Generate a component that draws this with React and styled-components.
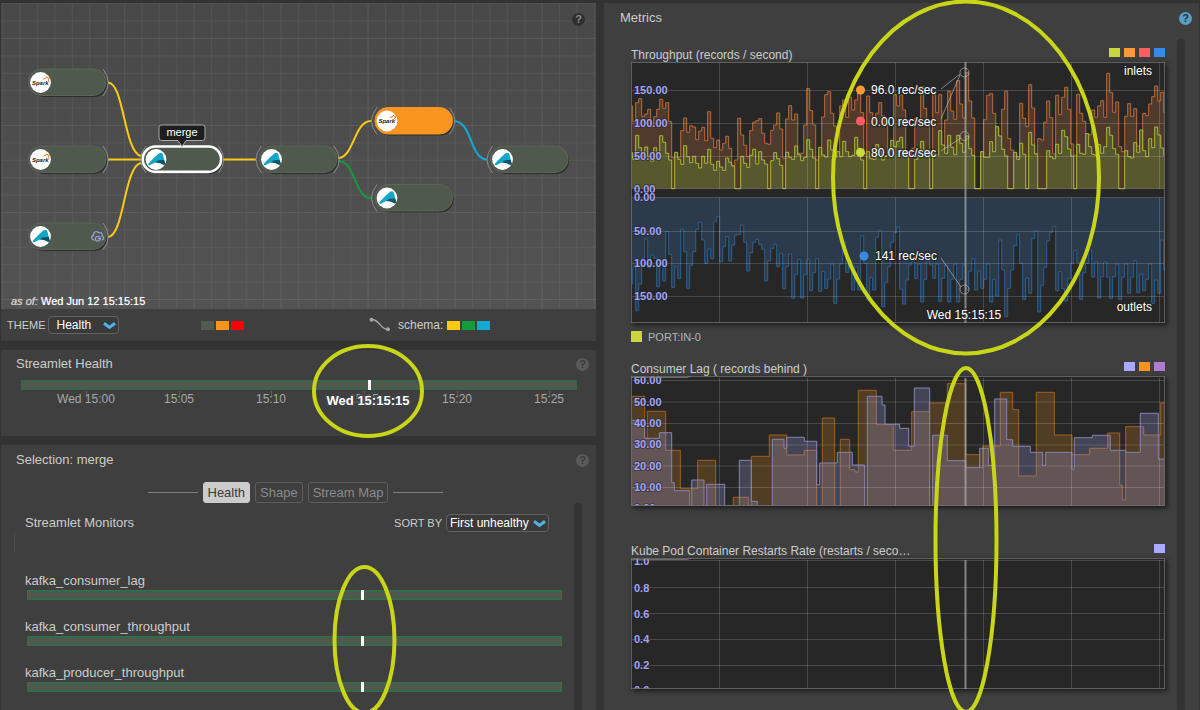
import React from 'react';
import styled, { createGlobalStyle } from 'styled-components';

const Global = createGlobalStyle`
  * { box-sizing: border-box; }
  body {
    margin: 0;
    background: #333333;
    color: #cccccc;
    font-family: "Liberation Sans", Arial, sans-serif;
    font-size: 13px;
    line-height: 16px;
  }
  h2, h3, h4, p { margin: 0; font-size: inherit; font-weight: 400; }
  svg { display: block; }
`;

const Page = styled.main`
  position: relative;
  display: grid;
  grid-template-columns: 1fr 1fr;
  gap: 8px;
  min-height: 100vh;
  padding: 3px 1px 0;
  overflow: hidden;
`;

const Column = styled.div`
  display: flex;
  flex-direction: column;
  gap: 9px;
  min-width: 0;
`;

const Panel = styled.section`
  display: flex;
  flex-direction: column;
  background: #3f3f3f;
  flex: ${(p) => (p.$grow ? 1 : 'none')};
  padding: ${(p) => p.$pad || '0'};
  min-width: 0;
`;

const PanelHeader = styled.header`
  display: flex;
  align-items: center;
  justify-content: space-between;
  height: 30px;
  padding: ${(p) => p.$pad || '0 5px 0 15px'};
`;

const HelpButton = styled.button`
  width: 13px;
  height: 13px;
  padding: 0;
  border: 0;
  border-radius: 50%;
  background: ${(p) => p.$bg || '#5a5a5a'};
  color: ${(p) => p.$fg || '#3a3a3a'};
  font: bold 11px/13px "Liberation Sans", Arial, sans-serif;
  text-align: center;
`;

/* ---------- topology ---------- */

const Canvas = styled.div`
  display: grid;
  background: linear-gradient(#484848, #535353);
  > * { grid-area: 1 / 1; }
`;

const CanvasDrawing = styled.svg`
  width: 100%;
  height: auto;
`;

const CanvasHelp = styled.div`
  justify-self: end;
  padding: 8px 11px;
`;

const AsOf = styled.p`
  align-self: end;
  padding: 0 10px;
  font-size: 11px;
  color: #ffffff;
  text-shadow: 0 0 1px #ffffff99;
  em { color: #d0d0d0; }
`;

const LegendBar = styled.div`
  display: grid;
  grid-template-columns: 200fr 168fr 227fr;
  align-items: center;
  height: 32px;
`;

const Inline = styled.div`
  display: flex;
  align-items: center;
  gap: ${(p) => p.$gap || 2}px;
  padding-left: ${(p) => p.$left || 0}px;
`;

const Caption = styled.label`
  font-size: ${(p) => p.$size || 11}px;
`;

const SelectBox = styled.div`
  position: relative;
  display: flex;
  select {
    appearance: none;
    width: ${(p) => p.$width}px;
    height: 18px;
    padding: 0 16px 0 ${(p) => p.$inset}px;
    border: 1px solid #626262;
    border-radius: 4px;
    background: #3a3a3a;
    color: #ffffff;
    font: 12px/16px "Liberation Sans", Arial, sans-serif;
  }
  svg {
    position: absolute;
    right: 3px;
    top: 6px;
    pointer-events: none;
  }
`;

const Swatch = styled.span`
  width: ${(p) => p.$w || 13}px;
  height: ${(p) => p.$h || 9}px;
  background: ${(p) => p.$color};
`;

/* ---------- timelines ---------- */

const TimelineBox = styled.div`
  padding: 0 19px 0 20px;
`;

const TimelineDrawing = styled.svg`
  width: 100%;
  height: auto;
  overflow: visible;
`;

const Tabs = styled.div`
  display: flex;
  align-items: center;
  justify-content: center;
  gap: 5px;
  padding: 7px 6px 0 0;
`;

const Rule = styled.span`
  width: 50px;
  height: 1px;
  background: #808080;
`;

const Tab = styled.button`
  height: 21px;
  padding: 0 4px;
  border: 1px solid ${(p) => (p.$active ? '#cccccc' : '#5c5c5c')};
  border-radius: 3px;
  background: ${(p) => (p.$active ? '#cccccc' : 'transparent')};
  color: ${(p) => (p.$active ? '#3a3a3a' : '#8a8a8a')};
  font: 13px/16px "Liberation Sans", Arial, sans-serif;
`;

const ScrollArea = styled.div`
  display: flex;
  flex: 1;
  padding-right: ${(p) => p.$right}px;
`;

const Track = styled.div`
  width: 8px;
  margin: ${(p) => p.$margin || '0'};
  border-radius: 4px;
  background: #333333;
`;

const MonitorList = styled.div`
  flex: 1;
  min-width: 0;
  padding: 10px 12px 14px 24px;
`;

const MonitorHead = styled.div`
  display: flex;
  align-items: center;
  justify-content: space-between;
  height: 20px;
  padding-right: 13px;
`;

const Divider = styled.div`
  width: 1px;
  height: 18px;
  margin: 0 0 22px -11px;
  background: #4d4d4d;
`;

const Monitor = styled.div`
  padding-bottom: 19px;
`;

const MonitorBar = styled.div`
  position: relative;
  height: 10px;
  margin: 1px 0 0 2px;
  border: 1px solid #217a46;
  background: #50594d;
  &::after {
    content: "";
    position: absolute;
    left: 62.5%;
    top: -1px;
    width: 3px;
    height: 10px;
    background: #ffffff;
  }
`;

/* ---------- metric charts ---------- */

const Charts = styled.div`
  flex: 1;
  min-width: 0;
  padding: 13px 12px 19px 27px;
`;

const ChartHead = styled.div`
  display: flex;
  align-items: center;
  justify-content: space-between;
  height: 16px;
  margin-top: ${(p) => p.$top || 0}px;
  h3 {
    width: 282px;
    padding-top: 2px;
    overflow: hidden;
    white-space: nowrap;
    text-overflow: ellipsis;
    font-size: 12px;
  }
`;

const Legend = styled.div`
  display: flex;
  gap: 4px;
  padding-bottom: 3px;
`;

const ChartDrawing = styled.svg`
  width: 100%;
  height: auto;
  background: #272727;
  box-shadow: 2px 2px 5px #00000099;
`;

const PortRow = styled.div`
  display: flex;
  align-items: center;
  gap: 6px;
  height: 11px;
  margin-top: 8px;
  font-size: 11px;
  color: #b4b4b4;
`;

const Annotations = styled.svg`
  position: absolute;
  inset: 0;
  width: 100%;
  height: auto;
  pointer-events: none;
`;

const Chevron = () => (
  <svg width="13" height="8" viewBox="0 0 13 8" fill="none" stroke="#4fb3e8" strokeWidth="3">
    <path d="M1 1.2 L6.5 5.4 L12 1.2" />
  </svg>
);

/* ---------- topology drawing ---------- */

const NODES = [
  { x: 40.5, y: 82.5, logo: 'spark', out: true },
  { x: 40.5, y: 159.5, logo: 'spark', out: true },
  { x: 40.5, y: 236.5, logo: 'akka', out: true, cloud: true },
  { x: 156, y: 159.5, logo: 'akka', in: true, out: true, selected: true },
  { x: 271.5, y: 159.5, logo: 'akka', in: true, out: true },
  { x: 387, y: 121, logo: 'spark', in: true, out: true, fill: '#f9941f' },
  { x: 387, y: 198, logo: 'akka', in: true },
  { x: 502.5, y: 159.5, logo: 'akka', in: true },
];

const EDGES = [
  ['M108 82.5 C124 82.5 124 152 141 156', '#fdca13'],
  ['M108 159.5 H141', '#fdca13'],
  ['M108 237 C124 237 124 166 141 163', '#fdca13'],
  ['M223 159.5 H256', '#fdca13'],
  ['M338 158 C354 158 354 121 371 121', '#fdca13'],
  ['M338 161 C356 161 354 198 371 198', '#159a3c'],
  ['M454 121 C472 121 470 159.5 487 159.5', '#12aad4'],
];

const Logo = ({ kind }) =>
  kind === 'spark' ? (
    <g>
      <text x="-8.6" y="2.4" fontSize="6" fontWeight="700" fontStyle="italic" fill="#222222">Spark</text>
      <path d="M3.4 -2.8 L3.6 -4 L5.4 -4.2 L6.3 -5.9 L7.2 -4.4 L9 -4.2 L7.8 -2.6 L8.4 -0.8" fill="none" stroke="#ee7d22" strokeWidth="1" />
    </g>
  ) : (
    <g>
      <path d="M-7.4 4 C-3.8 0.2 0.6 -4.6 3.6 -6.5 Q6 -7.6 6.8 -5.2 L8.6 1.6 C3 0.8 -1.8 3 -5.2 5.2 C-7 6.4 -8.6 5.4 -7.4 4Z" fill="#14a6c9" />
      <path d="M-1 3 C1.6 0.6 4.6 0 8.2 0.8 L9.4 3.8 C9.6 5.4 8.2 5.8 6.6 5 C4 3.6 2 3.2 -1 3Z" fill="#0b5568" />
    </g>
  );

const Node = ({ node }) => (
  <g transform={`translate(${node.x} ${node.y})`}>
    <g fill="none" stroke="#8c8c8c" strokeWidth="1">
      {node.in && <path d="M-10 -13.5 Q-21 0 -10 13.5" />}
      {node.out && <path d="M62.5 -13.5 Q73 0 62.5 13.5" />}
    </g>
    <rect x="-9.5" y="-11.5" width="76" height="26" rx="13" fill="#2d2d2d" />
    <rect
      x="-12" y="-13.5" width="77.5" height="26.5" rx="13"
      fill={node.fill || '#4f5a4d'} stroke={node.fill || '#5c655b'} strokeWidth="1"
    />
    {node.selected && <rect x="-13.3" y="-13" width="78.4" height="25.4" rx="12.7" fill="none" stroke="#ffffff" strokeWidth="2.6" />}
    <circle r="10.4" fill="#ffffff" />
    <Logo kind={node.logo} />
    {node.cloud && (
      <g fill="none" stroke="#9898d8" strokeWidth="1.3">
        <path d="M54 3.6 C50.6 3.6 50.4 -0.6 53 -1 C52.6 -4.6 56.4 -6 58.4 -3.6 C61 -4.8 62.6 -1.8 61.6 -0.2 C64 0.6 63.4 3.4 61 3.6" />
        <circle cx="57.3" cy="2.2" r="2.4" />
        <path d="M57.3 2.2 H60.5" />
      </g>
    )}
  </g>
);

const Topology = () => (
  <CanvasDrawing viewBox="1 3 595 306" role="img" aria-label="Pipeline graph">
    <defs>
      <pattern id="minor" x="19.6" y="38" width="17.4" height="17.4" patternUnits="userSpaceOnUse">
        <path d="M0 0 H17.4 M0 0 V17.4" stroke="#ffffff" strokeOpacity="0.055" strokeWidth="2" />
      </pattern>
      <pattern id="major" x="19.6" y="38" width="87" height="87" patternUnits="userSpaceOnUse">
        <path d="M0 0 H87 M0 0 V87" stroke="#ffffff" strokeOpacity="0.03" strokeWidth="2" />
      </pattern>
    </defs>
    <rect x="1" y="3" width="595" height="306" fill="url(#minor)" />
    <rect x="1" y="3" width="595" height="306" fill="url(#major)" />
    {EDGES.map(([d, color]) => (
      <path key={d} d={d} fill="none" stroke={color} strokeWidth="2" />
    ))}
    {NODES.map((n) => (
      <Node key={`${n.x}-${n.y}`} node={n} />
    ))}
    <path
      d="M161.5 125 H202.5 Q205 125 205 127.5 V138 Q205 140.5 202.5 140.5 H186 L182 146.5 L178 140.5 H161.5 Q159 140.5 159 138 V127.5 Q159 125 161.5 125Z"
      fill="#1e1e1e" stroke="#aaaaaa"
    />
    <text x="182" y="136" fontSize="11" fill="#ffffff" textAnchor="middle">merge</text>
  </CanvasDrawing>
);

/* ---------- chart data: heights in thirds of a pixel, one sample per 3px ---------- */

const INLET_ORANGE = [
  318, 365, 308, 296, 349, 342, 328, 380, 350, 328, 298, 325, 308, 365, 473, 473, 472, 392, 354, 397,
  377, 381, 419, 393, 382, 422, 335, 415, 443, 420, 450, 430, 409, 445, 497, 480, 355, 405, 436, 470,
  392, 367, 362, 356, 400, 430, 433, 391, 375, 339, 387, 475, 357, 317, 360, 342, 460, 460, 375, 266,
  332, 375, 480, 468, 351, 284, 275, 340, 378, 478, 318, 300, 352, 292, 330, 300, 280, 338, 460, 288,
  338, 360, 340, 308, 348, 375, 470, 462, 284, 318,
  285, 330, 468, 468, 445, 355, 372, 260, 325, 366, 470, 282, 338, 284, 445, 360, 274, 333, 358, 242,
  312, 354, 218, 303, 354, 566, 566, 455, 359, 286, 281, 340, 384, 410, 328, 274, 416, 450, 462, 470,
  310, 355, 380, 254, 324, 462, 416, 420, 367, 303, 353, 462, 286, 344, 292, 262, 328, 432, 466, 283,
  340, 364, 404, 404, 330, 352, 318, 302, 352, 220, 278, 337, 306, 440, 455, 349, 311, 349, 326, 438,
  456, 340, 347, 312, 290, 258, 303, 277, 338,
];

const INLET_LIME = [
  458, 478, 406, 443, 468, 441, 470, 483, 443, 460, 407, 427, 460, 480, 566, 457, 478, 493, 437, 470,
  488, 469, 490, 504, 469, 490, 448, 493, 511, 484, 501, 511, 474, 487, 498, 566, 566, 469, 490, 502,
  466, 448, 492, 455, 480, 492, 566, 482, 458, 476, 496, 566, 457, 472, 478, 438, 464, 482, 472, 419,
  448, 474, 566, 442, 465, 471, 420, 450, 472, 455, 470, 424, 455, 470, 466, 412, 445, 480, 566, 455,
  476, 478, 434, 455, 480, 468, 452, 421, 440, 424,
  412, 458, 466, 566, 566, 478, 460, 424, 450, 458, 566, 460, 465, 392, 435, 460, 406, 442, 464, 406,
  430, 457, 408, 446, 466, 566, 566, 455, 472, 472, 425, 455, 380, 408, 448, 468, 566, 566, 457, 478,
  430, 463, 566, 397, 435, 462, 566, 566, 566, 452, 470, 476, 433, 460, 391, 410, 447, 468, 566, 433,
  460, 463, 401, 440, 463, 466, 434, 460, 440, 382, 406, 446, 463, 566, 566, 452, 470, 474, 428, 457,
  390, 452, 470, 416, 443, 381, 405, 444, 466,
];

const OUTLET_BLUE = [
  282, 233, 362, 282, 205, 147, 233, 195, 205, 290, 220, 273, 125, 193, 292, 230, 266, 118, 185, 295,
  226, 185, 118, 97, 150, 220, 177, 206, 95, 80, 215, 170, 140, 213, 165, 135, 133, 105, 157, 243,
  188, 157, 148, 163, 178, 273, 212, 175, 163, 230, 190, 296, 230, 192, 325, 254, 208, 324, 254, 208,
  302, 248, 206, 304, 244, 295, 267, 222, 340, 267, 222, 155, 247, 212, 300, 230, 300, 137, 220, 330,
  262, 300, 142, 121, 350, 278, 230, 157, 128, 111,
  298, 342, 270, 225, 215, 266, 222, 336, 268, 215, 225, 265, 222, 334, 265, 225, 336, 268, 222, 336,
  268, 225, 300, 243, 206, 300, 243, 295, 268, 222, 336, 268, 318, 150, 240, 380, 295, 240, 167, 134,
  220, 328, 264, 310, 146, 122, 366, 286, 232, 153, 127, 110, 302, 245, 296, 333, 266, 220, 181, 218,
  328, 248, 220, 180, 261, 216, 324, 260, 216, 262, 326, 260, 222, 328, 262, 222, 310, 262, 212, 308,
  252, 302, 268, 222, 340, 270, 310, 150, 240, 382,
];

const LAG_ORANGE = [
  [93, 79], [134, 205], [142, 124], [197, 241], [241, 356], [293, 271], [347, 408], [400, 382], [446, 408],
  [454, 259], [508, 195], [560, 255], [613, 241], [650, 408], [667, 144], [704, 408], [721, 208], [749, 299],
  [765, 306], [775, 61], [829, 164], [880, 241], [935, 125], [988, 99], [1042, 41], [1097, 254], [1139, 293],
  [1148, 228], [1201, 67], [1238, 119], [1256, 318], [1309, 67], [1363, 195], [1416, 254], [1469, 235],
  [1523, 189], [1559, 345], [1567, 390], [1577, 170], [1631, 195], [1682, 99], [1695, 99],
];

const LAG_VIOLET = [
  [93, 151], [134, 205], [178, 188], [215, 338], [223, 362], [269, 408], [275, 330], [312, 408], [320, 343],
  [374, 408], [418, 271], [454, 394], [472, 408], [517, 208], [552, 235], [560, 202], [613, 214], [650, 344],
  [659, 279], [712, 247], [757, 285], [794, 408], [802, 79], [846, 105], [855, 163], [899, 175], [926, 229],
  [943, 54], [989, 408], [998, 196], [1042, 272], [1097, 293], [1139, 235], [1165, 286], [1184, 87],
  [1220, 209], [1238, 229], [1291, 247], [1328, 286], [1337, 247], [1416, 298], [1423, 203], [1477, 196],
  [1531, 241], [1577, 247], [1621, 130], [1675, 267], [1695, 267],
];

const W = 534;
const toPoints = (samples) => samples.map((v, i) => [89 + 9 * i, v]);

const stepPath = (points, offset) => {
  const xs = points.map(([x]) => Math.max(0, (x - 93) / 3));
  const ys = points.map(([, y]) => y / 3 + offset);
  return xs.map((x, i) => `${i ? 'H' : 'M'}${x.toFixed(1)}${i ? '' : ` ${ys[0].toFixed(1)}`}${i ? `V${ys[i].toFixed(1)}` : ''}`).join('') + `H${W}`;
};

const Series = ({ points, offset, base, fill, stroke, opacity }) => {
  const d = stepPath(points, offset);
  return (
    <g>
      <path d={`${d}V${base}H0Z`} fill={fill} fillOpacity={opacity} />
      <path d={d} fill="none" stroke={stroke} strokeWidth="1" />
    </g>
  );
};

const GridLines = ({ rows, top, bottom }) => (
  <g stroke="#ffffff" strokeOpacity="0.16">
    {[88.5, 176.5, 264.5, 352.5, 440.5, 528.5].map((x) => (
      <path key={x} d={`M${x} ${top}V${bottom}`} />
    ))}
    {rows.map((y) => (
      <path key={y} d={`M0 ${y}H${W}`} />
    ))}
  </g>
);

const AxisLabels = ({ labels }) => (
  <g
    fontSize="11" fontWeight="700" fill="#a3a3ee"
    stroke="#24243a" strokeOpacity="0.5" strokeWidth="2" paintOrder="stroke"
  >
    {labels.map(([text, y]) => (
      <text key={`${text}${y}`} x="3" y={y}>{text}</text>
    ))}
  </g>
);

const Frame = ({ height }) => (
  <path d={`M0.5 0V${height} M0 0.5H${W} M${W - 0.5} 0V${height} M0 ${height - 0.5}H${W}`} stroke="#6e6e6e" strokeOpacity="0.8" />
);

const Cursor = ({ height, top }) => <path d={`M334.5 ${top}V${height}`} stroke="#b5b5b5" strokeOpacity="0.65" strokeWidth="2" />;

const ThroughputChart = () => (
  <ChartDrawing viewBox="0 0 534 261" role="img" aria-label="Throughput chart">
    <Series points={toPoints(INLET_ORANGE)} offset={-62} base={126.5} fill="#4f3a2b" opacity="1" stroke="#bb6b3a" />
    <Series points={toPoints(INLET_LIME)} offset={-62} base={126.5} fill="#575a2d" opacity="0.95" stroke="#aab83a" />
    <Series points={toPoints(OUTLET_BLUE)} offset={128} base={135.5} fill="#2c3b4b" opacity="1" stroke="#2c5f92" />
    <GridLines rows={[28.5, 61.5, 94.5, 126.5]} top={0} bottom={127} />
    <GridLines rows={[135.5, 169.5, 201.5, 234.5]} top={135} bottom={261} />
    <AxisLabels
      labels={[['150.00', 32], ['100.00', 65], ['50.00', 98], ['0.00', 131], ['0.00', 139], ['50.00', 173], ['100.00', 205], ['150.00', 238]]}
    />
    <Frame height={261} />
    <Cursor top={0} height={261} />
    <g fill="none" stroke="#c4c4c4" strokeOpacity="0.6">
      <circle cx="333.5" cy="10.5" r="4.5" />
      <circle cx="333.5" cy="74" r="4.5" />
      <circle cx="333.5" cy="227.5" r="4.5" />
      <path d="M310 27 L329 12 M310 57 L329 13 M310 89 L330 76 M310 196 L330 225" />
    </g>
    <g>
      <circle cx="229.5" cy="28" r="4.5" fill="#ff9a36" />
      <circle cx="229.5" cy="59" r="4.5" fill="#ff5d62" />
      <circle cx="229.5" cy="90.5" r="4.5" fill="#c9da3c" />
      <circle cx="233" cy="194" r="4.5" fill="#368ce4" />
    </g>
    <g fontSize="12" fill="#ffffff" stroke="#222222" strokeOpacity="0.55" strokeWidth="3" paintOrder="stroke">
      <text x="240" y="32">96.0 rec/sec</text>
      <text x="240" y="64">0.00 rec/sec</text>
      <text x="240" y="95">80.0 rec/sec</text>
      <text x="244" y="198">141 rec/sec</text>
      <text x="333" y="257" textAnchor="middle">Wed 15:15:15</text>
      <text x="521" y="13" textAnchor="end">inlets</text>
      <text x="521" y="249" textAnchor="end">outlets</text>
    </g>
  </ChartDrawing>
);

const TopTab = () => <path d="M0 1.5 H56 L60 0" fill="none" stroke="#8a8a8a" strokeOpacity="0.7" />;

const LagChart = () => (
  <ChartDrawing viewBox="0 0 534 130" role="img" aria-label="Consumer lag chart">
    <Series points={LAG_ORANGE} offset={-6} base={130} fill="#d07a1c" opacity="0.25" stroke="#a2601f" />
    <Series points={LAG_VIOLET} offset={-6} base={130} fill="#9c9ce8" opacity="0.25" stroke="#8583b4" />
    <GridLines rows={[4.5, 26, 47.5, 69, 90, 111.5]} top={2} bottom={130} />
    <AxisLabels labels={[['60.00', 8], ['50.00', 30], ['40.00', 51], ['30.00', 72], ['20.00', 94], ['10.00', 115], ['0.00', 136]]} />
    <Frame height={130} />
    <TopTab />
    <Cursor top={2} height={130} />
  </ChartDrawing>
);

const RestartChart = () => (
  <ChartDrawing viewBox="0 0 534 131" role="img" aria-label="Restarts rate chart">
    <GridLines rows={[2.5, 29.5, 55.5, 81.5, 107.5]} top={2} bottom={131} />
    <AxisLabels labels={[['1.0', 7], ['0.8', 34], ['0.6', 60], ['0.4', 85], ['0.2', 111], ['0.0', 136]]} />
    <Frame height={131} />
    <TopTab />
    <Cursor top={2} height={131} />
  </ChartDrawing>
);

const ChartHeader = ({ title, colors, top }) => (
  <ChartHead $top={top}>
    <h3>{title}</h3>
    <Legend>
      {colors.map((c) => (
        <Swatch key={c} $w={11} $color={c} />
      ))}
    </Legend>
  </ChartHead>
);

const TICKS = [['Wed 15:00', 65], ['15:05', 158], ['15:10', 250], ['15:15', 343], ['15:20', 436], ['15:25', 528]];

const HealthTimeline = () => (
  <TimelineDrawing viewBox="0 0 556 45" role="img" aria-label="Streamlet health timeline">
    <rect x="0.5" y="0.5" width="555" height="9" fill="#50594d" stroke="#2b6b45" />
    <rect x="347" y="0" width="3" height="10" fill="#ffffff" />
    {TICKS.map(([label, x]) => (
      <g key={label}>
        <path d={`M${x + 0.5} 11V17`} stroke="#5e5e5e" />
        <text x={x} y="23" fontSize="12" fill="#a8a8a8" textAnchor="middle">{label}</text>
      </g>
    ))}
    <text
      x="347" y="25" fontSize="13" fontWeight="700" fill="#ffffff" stroke="#3f4448" strokeWidth="4" paintOrder="stroke"
      strokeOpacity="0.75" textAnchor="middle"
    >
      Wed 15:15:15
    </text>
  </TimelineDrawing>
);

const MONITORS = ['kafka_consumer_lag', 'kafka_consumer_throughput', 'kafka_producer_throughput'];

export default function App() {
  return (
    <>
      <Global />
      <Page>
        <Column>
          <Panel>
            <Canvas>
              <Topology />
              <CanvasHelp>
                <HelpButton $bg="#2f2f2f" $fg="#8a8a8a" aria-label="Graph help">?</HelpButton>
              </CanvasHelp>
              <AsOf><em>as of:</em> Wed Jun 12 15:15:15</AsOf>
            </Canvas>
            <LegendBar>
              <Inline $left={6}>
                <Caption htmlFor="theme">THEME</Caption>
                <SelectBox $width={71} $inset={8}>
                  <select id="theme"><option>Health</option></select>
                  <Chevron />
                </SelectBox>
              </Inline>
              <Inline>
                <Swatch $color="#4f5c4f" />
                <Swatch $color="#f9941f" />
                <Swatch $color="#ff0000" />
              </Inline>
              <Inline>
                <svg width="22" height="16" viewBox="0 0 22 16" fill="none" stroke="#a6a6a6" strokeWidth="1.5">
                  <path d="M2.5 2.5 C11 2.5 11 12.5 19 12.5" />
                  <circle cx="2.5" cy="2.8" r="1.2" fill="#a6a6a6" />
                  <circle cx="19" cy="12.3" r="1.2" fill="#a6a6a6" />
                </svg>
                <Inline $left={5} $gap={4}>
                  <Caption as="span" $size={12}>schema:</Caption>
                  <Inline>
                    <Swatch $color="#fdca13" />
                    <Swatch $color="#159a3c" />
                    <Swatch $color="#12aad4" />
                  </Inline>
                </Inline>
              </Inline>
            </LegendBar>
          </Panel>

          <Panel $pad="0 0 11px">
            <PanelHeader $pad="3px 7px 5px 15px">
              <h2>Streamlet Health</h2>
              <HelpButton aria-label="Health help">?</HelpButton>
            </PanelHeader>
            <TimelineBox>
              <HealthTimeline />
            </TimelineBox>
          </Panel>

          <Panel $grow>
            <PanelHeader $pad="0 7px 0 15px">
              <h2>Selection: merge</h2>
              <HelpButton aria-label="Selection help">?</HelpButton>
            </PanelHeader>
            <Tabs>
              <Rule />
              <Tab $active>Health</Tab>
              <Tab>Shape</Tab>
              <Tab>Stream Map</Tab>
              <Rule />
            </Tabs>
            <ScrollArea $right={14}>
              <MonitorList>
                <MonitorHead>
                  <h3>Streamlet Monitors</h3>
                  <Inline $gap={4}>
                    <Caption htmlFor="sort">SORT BY</Caption>
                    <SelectBox $width={103} $inset={3}>
                      <select id="sort"><option>First unhealthy</option></select>
                      <Chevron />
                    </SelectBox>
                  </Inline>
                </MonitorHead>
                <Divider />
                {MONITORS.map((name) => (
                  <Monitor key={name}>
                    <h4>{name}</h4>
                    <MonitorBar />
                  </Monitor>
                ))}
              </MonitorList>
              <Track />
            </ScrollArea>
          </Panel>
        </Column>

        <Panel>
          <PanelHeader $pad="0 7px 0 16px">
            <h2>Metrics</h2>
            <HelpButton $bg="#5a9fc6" $fg="#22303a" aria-label="Metrics help">?</HelpButton>
          </PanelHeader>
          <ScrollArea $right={14}>
            <Charts>
              <ChartHeader title="Throughput (records / second)" colors={['#c9d63c', '#ff9a36', '#ff5d62', '#368ce4']} />
              <ThroughputChart />
              <PortRow><Swatch $w={11} $h={11} $color="#c9d63c" />PORT:IN-0</PortRow>
              <ChartHeader top={18} title="Consumer Lag ( records behind )" colors={['#a9a9ff', '#f9941f', '#b07bd4']} />
              <LagChart />
              <ChartHeader top={36} title="Kube Pod Container Restarts Rate (restarts / second)" colors={['#a9a9ff']} />
              <RestartChart />
            </Charts>
            <Track $margin="6px 0 13px" />
          </ScrollArea>
        </Panel>

        <Annotations viewBox="0 0 1200 710" fill="none" stroke="#c8d617" strokeWidth="4" aria-hidden="true">
          <ellipse cx="966" cy="177.5" rx="133" ry="176" />
          <ellipse cx="368" cy="391" rx="54" ry="45" />
          <ellipse cx="364.5" cy="640" rx="30" ry="73" />
          <ellipse cx="966" cy="540" rx="30.5" ry="172" />
        </Annotations>
      </Page>
    </>
  );
}
